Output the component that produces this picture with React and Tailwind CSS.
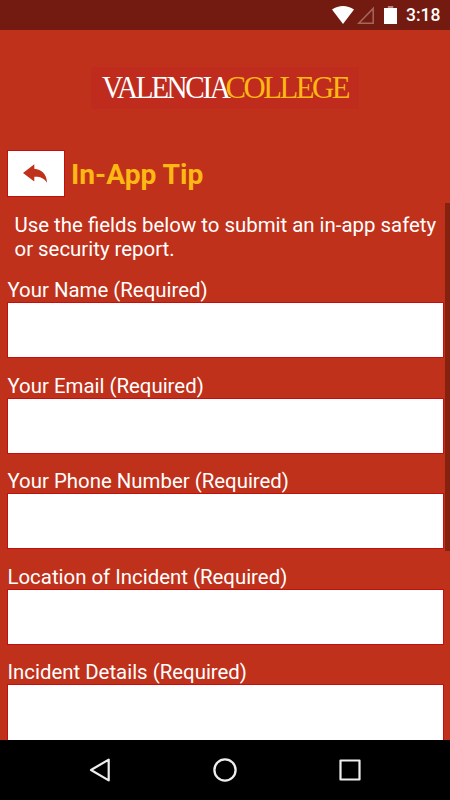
const fields = [
  { id: "name", label: "Your Name (Required)" },
  { id: "email", label: "Your Email (Required)" },
  { id: "phone", label: "Your Phone Number (Required)" },
  { id: "location", label: "Location of Incident (Required)" },
  { id: "details", label: "Incident Details (Required)", multiline: true },
];

function StatusBar() {
  return (
    <div className="flex h-[30px] shrink-0 items-center justify-end bg-[#731b10] pr-[10px] text-white">
      <svg className="mr-[3px] h-[18px] w-[22px]" viewBox="0 0 22 18" fill="currentColor">
        <path d="M0 3.6C6.5-1.2 15.5-1.2 22 3.6L11 18Z" />
      </svg>
      <svg className="mr-[10px] h-[18px] w-[17px]" viewBox="0 0 17 18" fill="none" stroke="#a5665e" strokeWidth="1.5">
        <path d="M1.8 17.2L16.2 2.4V17.2Z" />
      </svg>
      <svg className="mr-[9px] h-[18px] w-[13px]" viewBox="0 0 13 18">
        <path d="M3.8 0h5.4v2H3.8z" fill="#b98780" />
        <path d="M0 2h13v16H0z" fill="white" />
      </svg>
      <span className="mt-0.5 w-[34px] whitespace-nowrap text-[17.5px] font-medium leading-none">3:18</span>
    </div>
  );
}

function Logo() {
  return (
    <svg className="h-[42px] w-[268px] bg-[#bf2c1e]" viewBox="0 0 268 42" fontFamily="Liberation Serif, serif" fontSize="31">
      <text x="134.5" y="30.5" fill="#fdb813" textLength="122.5" lengthAdjust="spacingAndGlyphs" letterSpacing="-2.5">COLLEGE</text>
      <text x="11" y="30.5" fill="white" textLength="126.5" lengthAdjust="spacingAndGlyphs" letterSpacing="-2.5">VALENCIA</text>
    </svg>
  );
}

function Field({ id, label, multiline }) {
  return (
    <div className="h-[95.5px] shrink-0">
      <label htmlFor={id} className="block h-6 whitespace-nowrap text-[20.4px] leading-[23.4px]">{label}</label>
      {multiline ? (
        <textarea id={id} className="block h-[110px] w-full resize-none bg-white text-black ring-1 ring-[#c30f0d]" />
      ) : (
        <input id={id} className="block h-[54px] w-full bg-white text-black ring-1 ring-[#c30f0d]" />
      )}
    </div>
  );
}

function NavBar() {
  return (
    <div className="flex h-[60px] shrink-0 items-center justify-between bg-black px-[88px] text-[#eee]">
      <svg className="h-6 w-6" viewBox="0 0 24 24" fill="none" stroke="currentColor" strokeWidth="2.2" strokeLinejoin="round">
        <path d="M20.7 1.6V22.4L3 12Z" />
      </svg>
      <svg className="h-6 w-6" viewBox="0 0 24 24" fill="none" stroke="currentColor" strokeWidth="2.3">
        <circle cx="12" cy="12" r="10.6" />
      </svg>
      <svg className="h-6 w-6" viewBox="0 0 24 24" fill="none" stroke="currentColor" strokeWidth="2.2" strokeLinejoin="round">
        <rect x="2.5" y="2.5" width="19" height="19" />
      </svg>
    </div>
  );
}

export default function App() {
  return (
    <div className="flex h-[800px] w-[450px] flex-col overflow-hidden bg-[#bf311b] font-[Roboto,sans-serif] text-white">
      <StatusBar />
      <main className="relative flex min-h-0 flex-1 flex-col overflow-hidden pt-[37px]">
        <div className="flex shrink-0 justify-center pr-px">
          <Logo />
        </div>
        <div className="mt-[42px] flex shrink-0 items-center pl-2">
          <button aria-label="Back" className="flex h-[45px] w-14 items-center justify-center bg-white pr-[2px] text-[#bf311b] ring-1 ring-[#c30f0d]">
            <svg className="h-[19px] w-[25px]" viewBox="0 0 25 19" fill="currentColor">
              <path d="M0 9L11.3 0.2V4.8C18.6 5.2 23.9 10.5 24 18.7C21 14.2 17 12.4 11.3 12.8V17.6Z" />
            </svg>
          </button>
          <h1 className="ml-[7px] mt-[3px] whitespace-nowrap text-[28.2px] font-bold leading-8 text-[#fdb813]">In-App Tip</h1>
        </div>
        <p className="mt-[17px] shrink-0 whitespace-nowrap pl-[14.5px] text-[20.4px] leading-[24px]">
          Use the fields below to submit an in-app safety
          <br />
          or security report.
        </p>
        <form className="mt-[18px] flex flex-col pl-[7.5px] pr-[7px]">
          {fields.map((field) => (
            <Field key={field.id} {...field} />
          ))}
        </form>
        {/* scroll thumb */}
        <div className="absolute right-0 top-[173px] h-[348px] w-[5px] bg-[#86200f]" />
      </main>
      <NavBar />
    </div>
  );
}
